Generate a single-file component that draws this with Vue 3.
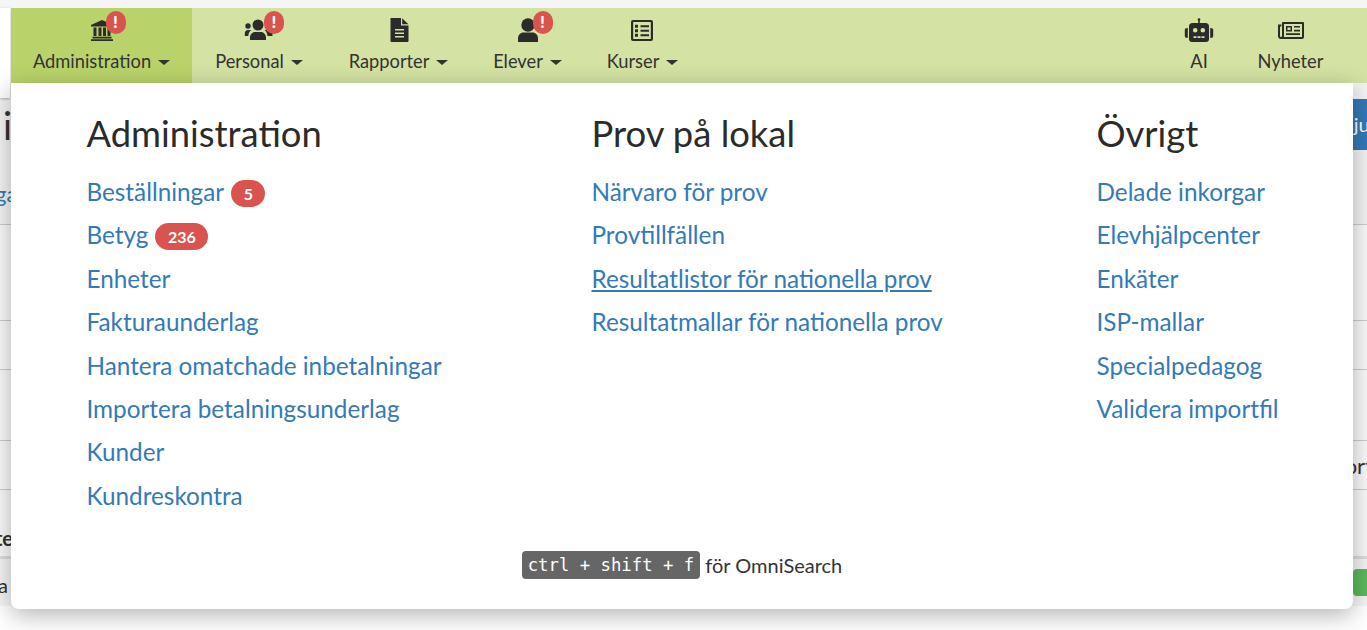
<template>
  <div class="page">
    <div class="backdrop">
      <div class="back-top">
        <div class="back-title"><span class="title-end">i</span><span class="blue-btn">sju</span></div>
        <div class="back-link"><a class="link-end">ga</a></div>
      </div>
      <div class="back-row tall"></div>
      <div class="back-row thin"></div>
      <div class="back-row mid"></div>
      <div class="back-row thin"><span></span><span class="port">Port</span></div>
      <div class="back-head"><b class="head-end">te</b></div>
      <div class="back-last"><span class="last-end">a</span><span class="green-btn"></span></div>
    </div>
    <div class="side"></div>

    <nav class="navbar">
      <a v-for="item in leftItems" :key="item.label" class="nav-item" :class="{ active: item.active }" :style="{ width: item.width + 'px' }">
        <span class="nav-icon">
          <svg viewBox="0 0 30 30" width="30" height="30" fill="#2b2b2b" v-html="item.icon"></svg>
          <span v-if="item.alert" class="alert" :style="{ left: item.alert + 'px' }">!</span>
        </span>
        <span class="nav-label">{{ item.label }}<i class="caret"></i></span>
      </a>
      <div class="spacer"></div>
      <a v-for="item in rightItems" :key="item.label" class="nav-item" :style="{ width: item.width + 'px' }">
        <span class="nav-icon">
          <svg viewBox="0 0 30 30" width="30" height="30" fill="#2b2b2b" v-html="item.icon"></svg>
        </span>
        <span class="nav-label">{{ item.label }}</span>
      </a>
    </nav>

    <div class="menu">
      <div class="columns">
        <section v-for="col in columns" :key="col.title" class="column" :style="{ width: col.width + 'px' }">
          <h2>{{ col.title }}</h2>
          <ul>
            <li v-for="link in col.links" :key="link.text">
              <a :class="{ hovered: link.hovered }">{{ link.text }}</a>
              <span v-if="link.badge" class="badge">{{ link.badge }}</span>
            </li>
          </ul>
        </section>
      </div>
      <p class="hint"><kbd>ctrl + shift + f</kbd> för OmniSearch</p>
    </div>
  </div>
</template>

<script setup>
const bank = '<path d="M15 5 4 10v1.500h22V10L15 5Z"/><path d="M6.500 12.500h3V21h-3zM11.500 12.500h3V21h-3zM16 12.500h3V21h-3zM20.500 12.500h3V21h-3z"/><path d="M5.500 21.800h19v1.700h-19zM4 24.300h22V26H4z"/>'
const users = '<circle cx="14" cy="10" r="5.500"/><path d="M6 25v-2.500c0-3 2.300-5.500 5-5.500h6c2.700 0 5 2.500 5 5.500V25Z"/><circle cx="4" cy="11" r="2.700"/><path d="M.8 21v-2.500c0-2 1.300-3.500 3-3.500h3.500c-1.800 1.300-2.800 3.300-3 6Z"/><circle cx="25" cy="11" r="2.700"/><path d="M23.500 21c-.2-2.700-1.200-4.700-3-6h4.500c2 0 3.500 1.500 3.500 3.500V21Z"/>'
const doc = '<path fill-rule="evenodd" d="M6.500 3h10.500v7.500h7.500V26a1 1 0 0 1-1 1h-16a1 1 0 0 1-1-1V3Zm4.500 11v1.500h9V14h-9Zm0 3.500V19h9v-1.500h-9Zm0 3.500v1.500h9V21h-9Z"/><path d="M18.200 3.200 24.400 9.300h-6.200V3.200Z"/>'
const user = '<circle cx="15" cy="10" r="6.700"/><path d="M5 27v-3.500C5 20 7.500 17.500 10.500 17.500h9c3 0 5.500 2.500 5.500 6V27Z"/>'
const list = '<path fill-rule="evenodd" d="M5 5h18a2 2 0 0 1 2 2v17a2 2 0 0 1-2 2H5a2 2 0 0 1-2-2V7a2 2 0 0 1 2-2Zm.200 2v17h17.600V7H5.200Z"/><path d="M7 9.800h3v3H7zM12.500 10.300h8.500v2h-8.500zM7 14.300h3v3H7zM12.500 14.800h8.500v2h-8.500zM7 18.800h3v3H7zM12.500 19.300h8.500v2h-8.500z"/>'
const robot = '<circle cx="15" cy="4.500" r="1.300"/><path d="M14.200 4.500h1.600V9h-1.600z"/><path fill-rule="evenodd" d="M8.500 8h13a3.500 3.500 0 0 1 3.500 3.500v12.500a3 3 0 0 1-3 3H8a3 3 0 0 1-3-3V11.500A3.500 3.500 0 0 1 8.500 8Zm2.700 5a2.300 2.300 0 1 0 0 4.600 2.300 2.300 0 0 0 0-4.600Zm7.600 0a2.300 2.300 0 1 0 0 4.600 2.300 2.300 0 0 0 0-4.600ZM9.500 21.300v1.700h3v-1.700h-3Zm4 0v1.700h3v-1.700h-3Zm4 0v1.700h3v-1.700h-3Z"/><path d="M3.800 13v10C1.500 23 .8 22.300.8 21v-6c0-1.300.7-2 3-2ZM26.200 13c2.300 0 3 .7 3 2v6c0 1.300-.7 2-3 2V13Z"/>'
const news = '<path fill-rule="evenodd" d="M7 7h20a1 1 0 0 1 1 1v14a2 2 0 0 1-2 2H5a3 3 0 0 1-3-3V9.500h3.400v2H4V21a1 1 0 0 0 2 0V8a1 1 0 0 1 1-1Zm1 2v12.500c0 .2 0 .3-.1.500H26V9H8Z"/><path fill-rule="evenodd" d="M10 11h6v5.500h-6V11Zm1.500 1.500v2.500h3v-2.500h-3Z"/><path d="M18 11h6v1.600h-6zM18 14.800h6v1.600h-6zM10 18.300h14v1.600H10z"/>'

const leftItems = [
  { label: 'Administration', icon: bank, alert: 19, active: true, width: 181 },
  { label: 'Personal', icon: users, alert: 20, width: 134 },
  { label: 'Rapporter', icon: doc, width: 145 },
  { label: 'Elever', icon: user, alert: 20, width: 113 },
  { label: 'Kurser', icon: list, width: 117 }
]

const rightItems = [
  { label: 'AI', icon: robot, width: 70 },
  { label: 'Nyheter', icon: news, width: 113 }
]

const columns = [
  {
    title: 'Administration',
    width: 505,
    links: [
      { text: 'Beställningar', badge: '5' },
      { text: 'Betyg', badge: '236' },
      { text: 'Enheter' },
      { text: 'Fakturaunderlag' },
      { text: 'Hantera omatchade inbetalningar' },
      { text: 'Importera betalningsunderlag' },
      { text: 'Kunder' },
      { text: 'Kundreskontra' }
    ]
  },
  {
    title: 'Prov på lokal',
    width: 505,
    links: [
      { text: 'Närvaro för prov' },
      { text: 'Provtillfällen' },
      { text: 'Resultatlistor för nationella prov', hovered: true },
      { text: 'Resultatmallar för nationella prov' }
    ]
  },
  {
    title: 'Övrigt',
    width: 200,
    links: [
      { text: 'Delade inkorgar' },
      { text: 'Elevhjälpcenter' },
      { text: 'Enkäter' },
      { text: 'ISP-mallar' },
      { text: 'Specialpedagog' },
      { text: 'Validera importfil' }
    ]
  }
]
</script>

<style>
html, body {
  margin: 0;
  overflow: hidden;
  background: #fff;
}
</style>

<style scoped>
.page {
  position: relative;
  height: 630px;
  overflow: hidden;
  background: #fff;
  padding-top: 8px;
  box-sizing: border-box;
  font-family: Lato, "Open Sans", sans-serif;
  color: #333;
}
.page::before {
  content: "";
  position: absolute;
  left: 0;
  right: 0;
  top: 0;
  height: 8px;
  background: #f5f5f5;
}
.backdrop {
  position: absolute;
  left: 0;
  right: 0;
  top: 83px;
  bottom: 0;
  overflow: hidden;
  font-size: 20px;
}
.back-top {
  height: 142px;
  box-sizing: border-box;
  padding-top: 16px;
  background: #f4f4f4;
  border-bottom: 1px solid #ccc;
}
.back-title {
  display: flex;
  justify-content: space-between;
  align-items: center;
  height: 51px;
}
.title-end {
  margin-left: 3px;
  font-size: 38px;
}
.blue-btn {
  width: 100px;
  margin-right: -60px;
  box-sizing: border-box;
  padding-left: 18px;
  height: 51px;
  line-height: 51px;
  background: #337ab7;
  color: #fff;
}
.back-link {
  margin-top: 31px;
  line-height: 26px;
  white-space: nowrap;
}
.link-end {
  margin-left: -5px;
  display: inline-block;
  color: #337ab7;
  font-size: 22px;
}
.back-row {
  display: flex;
  justify-content: space-between;
  align-items: center;
  border-bottom: 1px solid #ccc;
  box-sizing: border-box;
  background: #fafafa;
}
.tall { height: 96px; }
.thin { height: 49px; }
.mid { height: 71px; }
.port {
  margin-right: -6px;
  font-size: 22px;
}
.back-head {
  height: 69px;
  border-bottom: 3px solid #ddd;
  box-sizing: border-box;
  display: flex;
  align-items: flex-end;
  padding-bottom: 6px;
  background: #fafafa;
}
.head-end {
  margin-left: -5px;
}
.back-last {
  display: flex;
  justify-content: space-between;
  align-items: center;
  height: 47px;
  background: #f5f5f5;
}
.last-end {
  margin-left: -2px;
  padding-top: 5px;
}
.green-btn {
  width: 14px;
  height: 27px;
  background: #5cb85c;
  border-radius: 4px 0 0 4px;
}
.side {
  position: absolute;
  left: 0;
  top: 8px;
  width: 10px;
  height: 90px;
  background: #fff;
  box-shadow: 0 1px 3px rgba(0, 0, 0, 0.3);
}

.navbar {
  position: relative;
  display: flex;
  height: 75px;
  margin-left: 11px;
  padding-right: 20px;
  background: #d4e2a3;
}
.spacer {
  flex: 1;
}
.nav-item {
  display: flex;
  flex-direction: column;
  align-items: center;
  padding-top: 7px;
  box-sizing: border-box;
  color: #333;
}
.nav-item.active {
  background: #b9d36a;
}
.nav-icon {
  position: relative;
  display: block;
  height: 30px;
  line-height: 0;
}
.alert {
  position: absolute;
  top: -4px;
  width: 20px;
  height: 23px;
  border-radius: 10px;
  background: #d9534f;
  color: #fff;
  font-size: 17px;
  font-weight: 900;
  line-height: 21px;
  text-align: center;
}
.nav-label {
  margin-top: 3px;
  font-size: 18.300px;
  line-height: 26px;
  white-space: nowrap;
}
.caret {
  display: inline-block;
  margin-left: 7px;
  vertical-align: 3px;
  border-top: 5px solid #333;
  border-left: 6px solid transparent;
  border-right: 6px solid transparent;
}

.menu {
  position: absolute;
  left: 11px;
  right: 14px;
  top: 83px;
  height: 526px;
  box-sizing: border-box;
  padding: 25px 76px 0 75.500px;
  background: #fff;
  border-radius: 0 0 8px 8px;
  box-shadow: 0 6px 24px rgba(0, 0, 0, 0.3);
}
.columns {
  display: flex;
}
.column {
  flex: none;
}
h2 {
  margin: 0 0 18px;
  font-size: 36.400px;
  font-weight: 400;
  line-height: 50px;
  color: #2b2b2b;
}
ul {
  margin: 0;
  padding: 0;
  list-style: none;
}
li {
  height: 43.400px;
  line-height: 32px;
  font-size: 24.300px;
  white-space: nowrap;
}
li a {
  color: #337ab7;
}
li a.hovered {
  text-decoration: underline;
}
.badge {
  display: inline-block;
  margin-left: 7px;
  padding: 0 12.500px;
  height: 27px;
  line-height: 27px;
  border-radius: 14px;
  background: #d9534f;
  color: #fff;
  font-size: 16px;
  font-weight: 700;
  vertical-align: 1px;
}
.hint {
  position: absolute;
  left: 0;
  right: 0;
  top: 468px;
  margin: 0;
  text-align: center;
  font-size: 20px;
  line-height: 28px;
}
kbd {
  display: inline-block;
  padding: 0 6px;
  height: 28px;
  line-height: 28px;
  border-radius: 4px;
  background: #666;
  color: #fff;
  font-family: "DejaVu Sans Mono", monospace;
  font-size: 17.300px;
  vertical-align: top;
}
</style>
